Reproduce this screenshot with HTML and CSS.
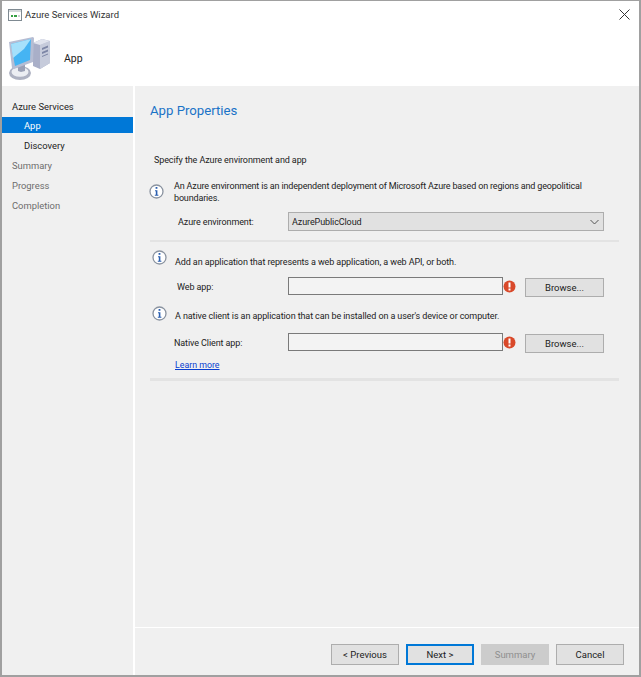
FILE: index.html
```html
<!DOCTYPE html>
<html lang="en">
<head>
<meta charset="utf-8">
<title>Azure Services Wizard</title>
<link rel="stylesheet" href="styles.css">
</head>
<body>
<div class="window">
  <div class="titlebar">
    <svg class="title-icon" width="14" height="12" viewBox="0 0 14 12"><rect x=".5" y=".5" width="13" height="11" fill="#fff" stroke="#7f8a92"/><rect x="1" y="1" width="12" height="2" fill="#d5d9dc"/><path d="M3 7h2M6 7h3" stroke="#35a043" stroke-width="2"/><path d="M10 7h2" stroke="#9aa3a8" stroke-width="1"/></svg>
    <span class="title-text">Azure Services Wizard</span>
    <svg class="close" width="11" height="11" viewBox="0 0 11 11"><path d="M.5.5l10 10M10.500.5l-10 10" stroke="#333" stroke-width="1"/></svg>
  </div>
  <div class="banner">
    <svg class="computer" width="42" height="44" viewBox="0 0 42 44">
      <path d="M24 7l9-4 8 2v22l-10 6-7-3z" fill="#a9afc8"/>
      <path d="M31 9l10-4v22l-10 6z" fill="#c6cbdb"/>
      <path d="M24 7l9-4 8 2-10 4z" fill="#e1e4ee"/>
      <path d="M33 12l6-2.500v2l-6 2.500zM33 16l6-2.500v2l-6 2.500zM33 20l6-2.500v1l-6 2.500z" fill="#7d86a6"/>
      <ellipse cx="11" cy="37" rx="11" ry="7" fill="#aeb2c2"/>
      <ellipse cx="11" cy="36" rx="8.500" ry="4.800" fill="#eceef3"/>
      <path d="M9 28h7v7l-4 1-3-1z" fill="#9aa0b5"/>
      <path d="M0 6l24-5 1 1-1 24-19 7-2-1z" fill="#b6bdd3"/>
      <path d="M2 8l20-5-1 21-15 6z" fill="#45b4f3"/>
      <path d="M2 8l20-5-7 10-11 9z" fill="#a5e0fb"/>
    </svg>
    <span class="banner-title">App</span>
  </div>
  <div class="body">
    <nav class="sidebar">
      <div class="nav-item nav-top">Azure Services</div>
      <div class="nav-item sub active">App</div>
      <div class="nav-item sub">Discovery</div>
      <div class="nav-item muted">Summary</div>
      <div class="nav-item muted">Progress</div>
      <div class="nav-item muted">Completion</div>
    </nav>
    <div class="main">
      <div class="content">
        <h1 class="heading">App Properties</h1>
        <p class="intro">Specify the Azure environment and app</p>

        <div class="info info-first">
          <svg class="info-icon" width="15" height="15" viewBox="0 0 15 15"><circle cx="7.500" cy="7.500" r="6.500" fill="#fff" stroke="#8a93a0" stroke-width="1.300"/><rect x="6.600" y="3" width="1.800" height="1.800" fill="#2b5fb0"/><path d="M6 6.300h2.400v4.500h1v.9H5.800v-.9h1V7.200H6z" fill="#2b5fb0"/></svg>
          <p>An Azure environment is an independent deployment of Microsoft Azure based on regions and geopolitical boundaries.</p>
        </div>
        <div class="row row-env">
          <span class="label label-env">Azure environment:</span>
          <div class="select">
            <span>AzurePublicCloud</span>
            <svg width="9" height="6" viewBox="0 0 9 6"><path d="M.5 1l4 4 4-4" fill="none" stroke="#555" stroke-width="1"/></svg>
          </div>
        </div>
        <div class="rule"></div>

        <div class="info info-web">
          <svg class="info-icon" width="15" height="15" viewBox="0 0 15 15"><circle cx="7.500" cy="7.500" r="6.500" fill="#fff" stroke="#8a93a0" stroke-width="1.300"/><rect x="6.600" y="3" width="1.800" height="1.800" fill="#2b5fb0"/><path d="M6 6.300h2.400v4.500h1v.9H5.800v-.9h1V7.200H6z" fill="#2b5fb0"/></svg>
          <p>Add an application that represents a web application, a web API, or both.</p>
        </div>
        <div class="row row-web">
          <span class="label label-web">Web app:</span>
          <div class="input"></div>
          <svg class="error" width="13" height="13" viewBox="0 0 13 13"><circle cx="6.500" cy="6.500" r="6" fill="#d9492a"/><rect x="5.500" y="2.500" width="2" height="5" fill="#fff"/><rect x="5.500" y="8.500" width="2" height="2" fill="#fff"/></svg>
          <button class="btn browse">Browse...</button>
        </div>

        <div class="info info-native">
          <svg class="info-icon" width="15" height="15" viewBox="0 0 15 15"><circle cx="7.500" cy="7.500" r="6.500" fill="#fff" stroke="#8a93a0" stroke-width="1.300"/><rect x="6.600" y="3" width="1.800" height="1.800" fill="#2b5fb0"/><path d="M6 6.300h2.400v4.500h1v.9H5.800v-.9h1V7.200H6z" fill="#2b5fb0"/></svg>
          <p>A native client is an application that can be installed on a user's device or computer.</p>
        </div>
        <div class="row row-native">
          <span class="label">Native Client app:</span>
          <div class="input"></div>
          <svg class="error" width="13" height="13" viewBox="0 0 13 13"><circle cx="6.500" cy="6.500" r="6" fill="#d9492a"/><rect x="5.500" y="2.500" width="2" height="5" fill="#fff"/><rect x="5.500" y="8.500" width="2" height="2" fill="#fff"/></svg>
          <button class="btn browse">Browse...</button>
        </div>
        <a class="learn" href="#">Learn more</a>
        <div class="rule rule-bottom"></div>
      </div>
      <div class="footer">
        <button class="btn action">&lt; Previous</button>
        <button class="btn action primary">Next &gt;</button>
        <button class="btn action disabled">Summary</button>
        <button class="btn action">Cancel</button>
      </div>
    </div>
  </div>
</div>
</body>
</html>
```
FILE: styles.css
```css
* { box-sizing: border-box; }
html, body { margin: 0; padding: 0; }
body {
  width: 641px;
  height: 677px;
  font-family: Roboto, "Noto Sans", sans-serif;
  font-size: 9px;
  letter-spacing: -.1px;
  color: #222;
  background: #fff;
  overflow: hidden;
}
p, h1 { margin: 0; font-weight: 400; }
.window {
  height: 677px;
  display: flex;
  flex-direction: column;
  border: 1px solid #a0a0a0;
  border-width: 1px 2px 2px 2px;
  background: #fff;
}
.titlebar {
  height: 27px;
  display: flex;
  align-items: center;
  padding: 0 8px 0 6px;
  flex: none;
}
.title-icon { flex: none; }
.title-text { margin-left: 3px; font-size: 9.500px; letter-spacing: 0; color: #333; }
.close { margin-left: auto; margin-right: 1px; }
.banner {
  height: 58px;
  flex: none;
  display: flex;
  align-items: center;
  padding: 2px 0 0 7px;
}
.banner-title { margin-left: 13px; font-size: 10.500px; letter-spacing: 0; color: #222; }
.body { flex: 1; display: flex; min-height: 0; }
.sidebar {
  width: 131px;
  flex: none;
  background: #f0f0f0;
  padding-top: 10px;
}
.nav-item {
  height: 20px;
  line-height: 20px;
  padding-left: 10px;
  font-size: 9.400px;
  letter-spacing: 0;
  color: #222;
}
.nav-top { height: 21px; line-height: 21px; }
.nav-item.sub { padding-left: 22px; }
.nav-item.active { background: #0078d7; color: #fff; height: 16px; line-height: 18px; margin: 0 0 3px; }
.nav-item.muted { color: #6d6d6d; }
.main {
  flex: 1;
  margin-left: 2px;
  display: flex;
  flex-direction: column;
  background: #f0f0f0;
  min-width: 0;
}
.content { flex: 1; padding: 16px 20px 0 15px; }
.heading { font-size: 13.200px; line-height: 18px; letter-spacing: 0; color: #1a73c7; }
.intro { margin: 33px 0 0 4px; line-height: 14px; }
.info { display: flex; align-items: flex-start; }
.info p { line-height: 12px; }
.info-first { margin: 13px 0 0 -2px; }
.info-first .info-icon { margin-top: 4px; }
.info-first p { margin-left: 10px; width: 425px; letter-spacing: -.16px; }
.info-web { margin-top: 8px; padding-left: 1px; }
.info-web p { margin: 6px 0 0 8px; }
.info-native { margin-top: 8px; padding-left: 1px; }
.info-native p { margin: 4px 0 0 8px; }
.info-icon { flex: none; margin-left: 1px; }
.row { display: flex; align-items: flex-start; }
.label { flex: none; width: 138px; padding-left: 24px; line-height: 21px; }
.label-env { padding-left: 28px; line-height: 21px; }
.label-web { padding-left: 27px; }
.row-env { margin-top: 8px; }
.row-web { margin-top: 9px; }
.row-native { margin-top: 11px; }
.select {
  width: 316px;
  height: 19px;
  flex: none;
  background: #e1e1e1;
  border: 1px solid #adadad;
  display: flex;
  align-items: center;
  justify-content: space-between;
  padding: 1px 4px 0 3px;
}
.input {
  width: 215px;
  height: 18px;
  flex: none;
  background: #f3f3f3;
  border: 1px solid #7a7a7a;
}
.error { flex: none; margin-top: 3px; }
.btn {
  font-family: inherit;
  font-size: 9.500px;
  letter-spacing: 0;
  color: #222;
  background: #e1e1e1;
  border: 1px solid #adadad;
  padding: 0 0 1px;
}
.browse { width: 79px; height: 19px; margin-left: 9px; margin-top: 1px; flex: none; }
.rule { height: 2px; margin-top: 7px; background: #e3e3e3; }
.rule-bottom { margin-top: 7px; height: 3px; }
.learn {
  display: block;
  margin: 5px 0 0 25px;
  line-height: 12px;
  font-size: 8.800px;
  letter-spacing: 0;
  color: #0a3fd0;
}
.footer {
  flex: none;
  height: 48px;
  border-top: 1px solid #fff;
  display: flex;
  justify-content: flex-end;
  gap: 7px;
  padding: 16px 15px 0 0;
}
.action { width: 68px; height: 21px; }
.primary { border: 2px solid #0078d7; }
.disabled { background: #ccc; border-color: #ccc; color: #8f8f8f; }
```
